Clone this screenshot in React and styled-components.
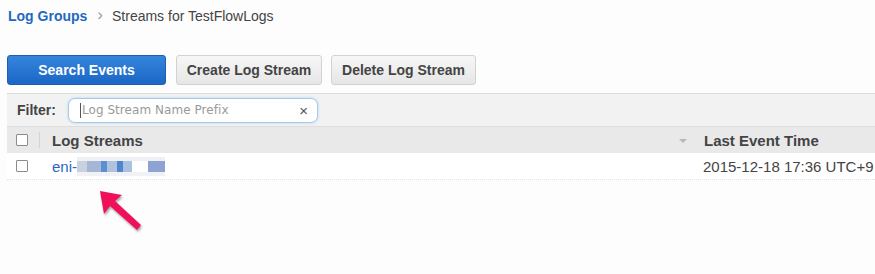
import styled, { createGlobalStyle } from "styled-components";

const GlobalStyle = createGlobalStyle`
html, body {
    margin: 0;
    padding: 0;
    background: #ffffff;
}
body {
    font-family: "Liberation Sans", Arial, sans-serif;
}
`

const blur = [
    { w: 10, c: "#c9d0de" },
    { w: 14, c: "#a7b5d6" },
    { w: 6, c: "#5b8fcf" },
    { w: 10, c: "#b3c2dc" },
    { w: 6, c: "#4e87cb" },
    { w: 9, c: "#a9c2e0" },
    { w: 16, c: "#ffffff" },
    { w: 17, c: "#8fa3d2" },
]

function Checkbox() {
    return <Box />
}

function Arrow() {
    return (
        <ArrowSvg width="52" height="52" viewBox="0 0 52 52">
            <polygon
                points="5,5 27,9 20,15 46,39 42,44 15,20 9,28"
                fill="#f0105a"
                style={{ filter: "drop-shadow(1px 2px 1px rgba(0,0,0,0.35))" }}
            />
        </ArrowSvg>
    )
}

export default function App() {
    return (
        <Page>
            <GlobalStyle />
            <Breadcrumb>
                <Crumb href="#">Log Groups</Crumb>
                <Chevron>›</Chevron>
                <Current>Streams for TestFlowLogs</Current>
            </Breadcrumb>
            <Toolbar>
                <Button primary width={159}>Search Events</Button>
                <Button width={146}>Create Log Stream</Button>
                <Button width={145}>Delete Log Stream</Button>
            </Toolbar>
            <Panel>
                <FilterBar>
                    <FilterLabel>Filter:</FilterLabel>
                    <FilterInput>
                        <Caret />
                        <Placeholder>Log Stream Name Prefix</Placeholder>
                        <Clear>×</Clear>
                    </FilterInput>
                </FilterBar>
                <HeaderRow>
                    <CheckCell separated><Checkbox /></CheckCell>
                    <HeadCell>
                        Log Streams
                        <SortArrow />
                    </HeadCell>
                    <HeadCell last>Last Event Time</HeadCell>
                </HeaderRow>
                <Row>
                    <CheckCell><Checkbox /></CheckCell>
                    <Cell>
                        <StreamLink href="#">eni-</StreamLink>
                        <Mosaic>
                            {blur.map((b, i) => <Pixel key={i} style={{ width: b.w, background: b.c }} />)}
                        </Mosaic>
                    </Cell>
                    <Cell last>2015-12-18 17:36 UTC+9</Cell>
                </Row>
            </Panel>
            <Arrow />
        </Page>
    )
}

const Page = styled.div`
position: relative;
width: 875px;
height: 274px;
overflow: hidden;
background: #fdfdfd;
`

const Breadcrumb = styled.div`
display: flex;
align-items: center;
height: 18px;
padding: 7px 0 0 8px;
font-size: 14px;
`

const Crumb = styled.a`
color: #1f69c1;
font-weight: 700;
text-decoration: none;
`

const Chevron = styled.span`
color: #9a9a9a;
font-size: 17px;
margin: -2px 9px 0 10px;
`

const Current = styled.span`
color: #444444;
`

const Toolbar = styled.div`
display: flex;
gap: 9px;
padding: 30px 0 0 7px;
height: 30px;
`

const Button = styled.button`
width: ${p => p.width}px;
height: 30px;
box-sizing: border-box;
border-radius: 3px;
border: 1px solid ${p => p.primary ? "#1b5fb3" : "#d2d2d2"};
background: ${p => p.primary
        ? "linear-gradient(#3585dc, #1c66c6)"
        : "linear-gradient(#f7f7f7, #e6e6e6)"};
color: ${p => p.primary ? "#ffffff" : "#444444"};
font-family: "Liberation Sans", Arial, sans-serif;
font-size: 14px;
font-weight: 700;
padding: 0;
margin-right: ${p => p.primary ? "1px" : "0"};
`

const Panel = styled.div`
margin: 8px 0 0 7px;
width: 900px;
border-top: 1px solid #dcdcdc;
`

const FilterBar = styled.div`
display: flex;
align-items: center;
height: 32px;
background: #f2f2f2;
padding-left: 10px;
`

const FilterLabel = styled.span`
font-size: 14px;
font-weight: 700;
color: #444444;
width: 51px;
`

const FilterInput = styled.div`
position: relative;
display: flex;
align-items: center;
box-sizing: border-box;
width: 250px;
height: 25px;
background: #ffffff;
border: 1px solid #a8c8ea;
border-radius: 7px;
box-shadow: 0 0 3px #b6d6f4;
padding-left: 11px;
`

const Caret = styled.span`
width: 1px;
height: 15px;
background: #555555;
margin-right: 1px;
`

const Placeholder = styled.span`
font-family: "DejaVu Sans", Tahoma, sans-serif;
font-size: 12px;
color: #9a9a9a;
letter-spacing: 0.05px;
`

const Clear = styled.span`
position: absolute;
right: 9px;
top: 3px;
font-size: 15px;
color: #555555;
`

const Grid = styled.div`
display: grid;
grid-template-columns: 33px 655px 1fr;
align-items: center;
`

const HeaderRow = styled(Grid)`
height: 26px;
background: #e9e9e9;
border-top: 1px solid #dedede;
`

const Row = styled(Grid)`
height: 26px;
background: #ffffff;
border-bottom: 1px dotted #e2e2e2;
`

const CheckCell = styled.div`
display: flex;
align-items: center;
height: 16px;
padding-left: 9px;
border-right: 1px solid ${p => p.separated ? "#d4d4d4" : "transparent"};
`

const Box = styled.span`
width: 12px;
height: 12px;
border: 1px solid #8c8c8c;
background: #ffffff;
box-sizing: border-box;
border-radius: 1px;
`

const HeadCell = styled.div`
position: relative;
padding-left: ${p => p.last ? "9px" : "12px"};
font-size: 15px;
font-weight: 700;
color: #444444;
white-space: nowrap;
`

const SortArrow = styled.span`
position: absolute;
right: 8px;
top: 7px;
border-left: 4px solid transparent;
border-right: 4px solid transparent;
border-top: 4px solid #b8b8b8;
`

const Cell = styled.div`
display: flex;
align-items: center;
padding-left: ${p => p.last ? "8px" : "12px"};
font-size: 15px;
color: #444444;
white-space: nowrap;
`

const StreamLink = styled.a`
color: #1f69c1;
text-decoration: none;
`

const Mosaic = styled.span`
display: flex;
height: 11px;
box-shadow: 0 -4px 0 #eef0f5, 0 4px 0 #f1f2f6;
`

const Pixel = styled.span`
height: 100%;
`

const ArrowSvg = styled.svg`
position: absolute;
left: 95px;
top: 186px;
`
